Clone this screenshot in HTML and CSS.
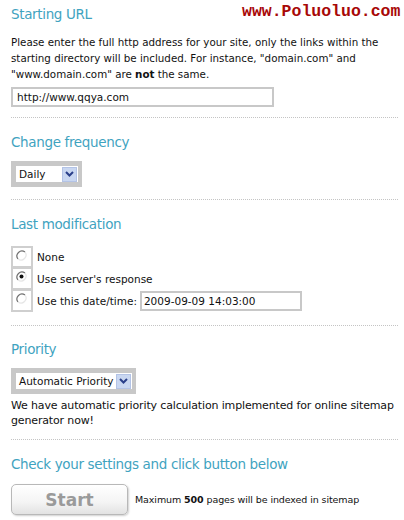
FILE: index.html
```html
<!DOCTYPE html>
<html>
<head>
<meta charset="utf-8">
<link rel="stylesheet" href="styles.css">
</head>
<body>
<div class="page">
  <div class="watermark">www.Poluoluo.com</div>

  <section class="sec sec-url">
    <h2 class="title">Starting URL</h2>
    <p class="desc">Please enter the full http address for your site, only the links within the starting directory will be included. For instance, "domain.com" and "www.domain.com" are <b>not</b> the same.</p>
    <div class="field url-field">http://www.qqya.com</div>
  </section>

  <section class="sec sec-freq">
    <h2 class="title">Change frequency</h2>
    <div class="select-frame">
      <div class="select-inner freq-inner">
        <span class="select-text">Daily</span>
        <span class="select-btn"><svg width="9" height="6" viewBox="0 0 9 6"><path d="M1 1 L4.5 4.5 L8 1" fill="none" stroke="#2a3f8a" stroke-width="2"/></svg></span>
      </div>
    </div>
  </section>

  <section class="sec sec-mod">
    <h2 class="title">Last modification</h2>
    <div class="radios">
      <div class="radio-row">
        <span class="radio-box"><svg width="12" height="12" viewBox="0 0 12 12"><path d="M2 9 A5 5 0 0 1 9 2" fill="none" stroke="#707070" stroke-width="1.2"/><path d="M9 2 A5 5 0 0 1 2 9" fill="none" stroke="#e6e6e6" stroke-width="1.2"/></svg></span>
        <span class="radio-label">None</span>
      </div>
      <div class="radio-row">
        <span class="radio-box"><svg width="12" height="12" viewBox="0 0 12 12"><path d="M2 9 A5 5 0 0 1 9 2" fill="none" stroke="#707070" stroke-width="1.2"/><path d="M9 2 A5 5 0 0 1 2 9" fill="none" stroke="#e6e6e6" stroke-width="1.2"/><circle cx="5.5" cy="5.5" r="2" fill="#111"/></svg></span>
        <span class="radio-label">Use server's response</span>
      </div>
      <div class="radio-row">
        <span class="radio-box"><svg width="12" height="12" viewBox="0 0 12 12"><path d="M2 9 A5 5 0 0 1 9 2" fill="none" stroke="#707070" stroke-width="1.2"/><path d="M9 2 A5 5 0 0 1 2 9" fill="none" stroke="#e6e6e6" stroke-width="1.2"/></svg></span>
        <span class="radio-label">Use this date/time:</span>
        <div class="field date-field">2009-09-09 14:03:00</div>
      </div>
    </div>
  </section>

  <section class="sec sec-prio">
    <h2 class="title">Priority</h2>
    <div class="select-frame">
      <div class="select-inner prio-inner">
        <span class="select-text">Automatic Priority</span>
        <span class="select-btn"><svg width="9" height="6" viewBox="0 0 9 6"><path d="M1 1 L4.5 4.5 L8 1" fill="none" stroke="#2a3f8a" stroke-width="2"/></svg></span>
      </div>
    </div>
    <p class="note">We have automatic priority calculation implemented for online sitemap generator now!</p>
  </section>

  <section class="sec sec-start">
    <h2 class="title">Check your settings and click button below</h2>
    <div class="start-row">
      <div class="start-btn">Start</div>
      <span class="start-info">Maximum <b>500</b> pages will be indexed in sitemap</span>
    </div>
  </section>
</div>
</body>
</html>
```
FILE: styles.css
```css
* { box-sizing: border-box; }
html, body { margin: 0; padding: 0; background: #fff; }
body {
  font-family: "DejaVu Sans", Verdana, sans-serif;
  color: #111;
  width: 404px;
  height: 520px;
  overflow: hidden;
}
.page {
  position: relative;
  padding: 5px 4px 0 11px;
}
.watermark {
  position: absolute;
  top: 2px;
  left: 242px;
  font-family: "Liberation Mono", "Courier New", monospace;
  font-weight: bold;
  font-size: 16.5px;
  line-height: 20px;
  color: #a80808;
}
.sec {
  border-bottom: 1px dotted #c4c4c4;
  margin-right: 2px;
}
.title {
  margin: 0;
  font-size: 13.5px;
  line-height: 18px;
  font-weight: normal;
  color: #3fa3bf;
  letter-spacing: -0.35px;
}
.sec-url { padding-bottom: 10px; }
.desc {
  margin: 11px 0 0 0;
  font-size: 10.3px;
  line-height: 16px;
  color: #111;
}
.desc b { font-weight: bold; }
.field {
  border: 2px solid #c8c8c8;
  background: #fff;
  font-size: 10.5px;
  font-family: "DejaVu Sans", Verdana, sans-serif;
  color: #111;
  padding: 0 4px;
  display: flex;
  align-items: center;
}
.url-field {
  margin-top: 5px;
  width: 263px;
  height: 20px;
}
.sec-freq { padding-top: 15px; padding-bottom: 12px; }
.select-frame {
  margin-top: 10px;
  display: inline-block;
  background: #c8c8c8;
  padding: 5px 4px 5px 5px;
}
.select-inner {
  background: #fff;
  height: 16px;
  display: flex;
  align-items: center;
  justify-content: space-between;
  font-size: 10.5px;
  padding-left: 3px;
}
.freq-inner { width: 62px; }
.prio-inner { width: 116px; }
.select-text { white-space: nowrap; }
.select-btn {
  width: 15px;
  height: 15px;
  background: #c9d7f1;
  border: 1px solid #b3c3e6;
  display: flex;
  align-items: center;
  justify-content: center;
  margin-right: 1px;
}
.sec-mod { padding-top: 15px; padding-bottom: 13px; }
.radios { margin-top: 13px; }
.radio-row {
  display: flex;
  align-items: center;
  height: 22px;
  font-size: 10.5px;
}
.radio-box {
  width: 22px;
  height: 22px;
  border: 2px solid #cfcfcf;
  display: flex;
  align-items: flex-start;
  justify-content: flex-start;
  padding: 2px 0 0 3px;
  margin-top: -1px;
}
.radio-row + .radio-row .radio-box { border-top-width: 1px; }
.radio-label { margin-left: 4px; }
.date-field {
  margin-left: 3px;
  width: 162px;
  height: 20px;
  padding-left: 2px;
}
.sec-prio { padding-top: 14px; padding-bottom: 11px; }
.note {
  margin: 4px 0 0 0;
  font-size: 11px;
  line-height: 15px;
  color: #111;
  letter-spacing: -0.15px;
}
.sec-start { padding-top: 15px; border-bottom: none; }
.start-row {
  margin-top: 11px;
  display: flex;
  align-items: center;
}
.start-btn {
  width: 117px;
  height: 31px;
  border: 1px solid #b8b8b8;
  border-radius: 5px;
  background: linear-gradient(#ffffff, #f4f4f4 60%, #e2e2e2);
  box-shadow: 1px 1px 2px #d0d0d0;
  color: #9a9a9a;
  font-weight: bold;
  font-size: 17px;
  display: flex;
  align-items: center;
  justify-content: center;
}
.start-info {
  margin-left: 7px;
  font-size: 9.5px;
  color: #111;
  letter-spacing: -0.1px;
}
```
